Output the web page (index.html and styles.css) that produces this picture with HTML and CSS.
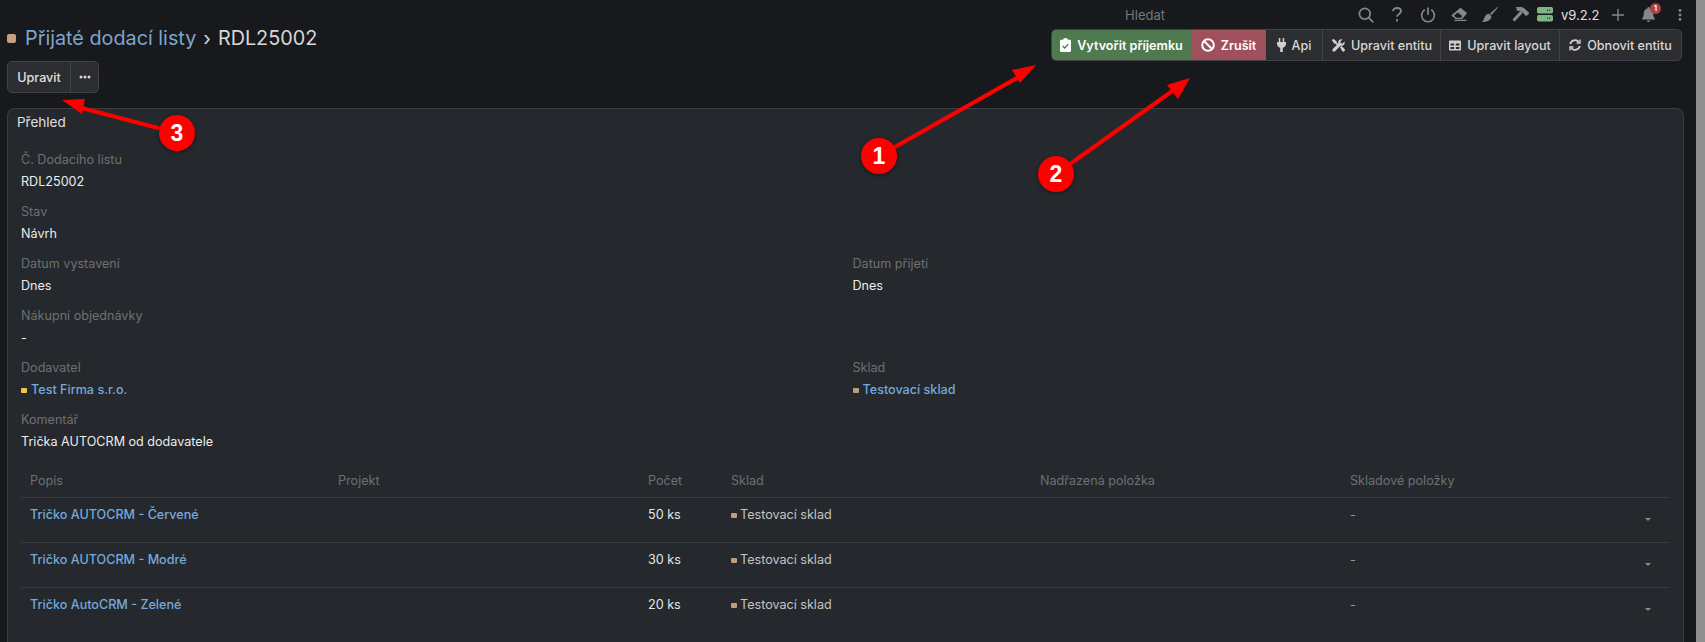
FILE: index.html
```html
<!DOCTYPE html>
<html lang="cs">
<head>
    <meta charset="UTF-8">
    <title>Přijaté dodací listy - RDL25002</title>
    <link rel="stylesheet" href="styles.css">
</head>
<body>
    <div class="page">
        <div class="main">
            <div class="header">
                <div class="header-left">
                    <h1 class="title">
                        <span class="square tan-big"></span>
                        <a class="title-link">Přijaté dodací listy</a>
                        <span class="title-sep">›</span>
                        <span>RDL25002</span>
                    </h1>
                    <div class="btn-group">
                        <button class="btn btn-edit">Upravit</button>
                        <button class="btn btn-more">
                            <svg width="12" height="4" viewBox="0 0 12 4"><circle cx="2" cy="2" r="1.5"/><circle cx="6" cy="2" r="1.5"/><circle cx="10" cy="2" r="1.5"/></svg>
                        </button>
                    </div>
                </div>
                <div class="header-right">
                    <div class="topbar">
                        <span class="search-label">Hledat</span>
                        <span class="top-icon">
                            <svg width="16" height="16" viewBox="0 0 16 16" fill="none" stroke="#85878a" stroke-width="1.7"><circle cx="6.8" cy="6.8" r="5.4"/><path d="M10.800 10.800l4.500 4.500"/></svg>
                        </span>
                        <span class="top-icon">
                            <svg width="10" height="15" viewBox="0 0 10 15" fill="none" stroke="#85878a" stroke-width="1.8"><path d="M1 4.200C1 2.200 2.800 1 5 1s4 1.200 4 3.300c0 2.600-4 2.600-4 5.400"/><path d="M5 12v2.400"/></svg>
                        </span>
                        <span class="top-icon">
                            <svg width="16" height="16" viewBox="0 0 16 16" fill="none" stroke="#85878a" stroke-width="1.7"><path d="M4.800 2.800a6.400 6.400 0 1 0 6.400 0"/><path d="M8 .6v7.200"/></svg>
                        </span>
                        <span class="top-icon">
                            <svg width="16" height="13" viewBox="0 0 16 13" fill="#85878a"><path d="M8.600.5c.5-.5 1.200-.5 1.700-.1l5 3.800c.6.500.6 1.200.2 1.700l-4.400 5.200H4.700L1 8.200c-.5-.5-.4-1.100 0-1.500z"/><rect x="3.500" y="11.700" width="12" height="1.300"/><path d="M3 7.800l2.400 1.900h4.500l1.400-1.600-4.700-3.600z" fill="#18191d"/></svg>
                        </span>
                        <span class="top-icon">
                            <svg width="16" height="15" viewBox="0 0 16 15" fill="#85878a"><path d="M15.400 0l.6.600-6.600 7.700-1.500-1.500z"/><path d="M6.800 6.800l2.600 2.400c-.1 3.200-2.900 5.800-9.400 5.800 1.800-1 1.600-3 2.700-4.900.9-1.800 2.500-3.100 4.100-3.300z"/></svg>
                        </span>
                        <span class="top-icon">
                            <svg width="17" height="15" viewBox="0 0 17 15" fill="none" stroke="#85878a"><path d="M1.500 13.500L9.500 5" stroke-width="3"/><path d="M4.500 1.800C8 1 12 3 15.800 7.800" stroke-width="4.500"/></svg>
                        </span>
                        <span class="server-icon">
                            <svg width="16" height="15" viewBox="0 0 16 15"><rect y="0" width="16" height="6.500" rx="1.800" fill="#7db587"/><rect y="8" width="16" height="6.500" rx="1.800" fill="#7db587"/><path d="M10 3.200h3.500M10 11.200h3.500" stroke="#18191d" stroke-width="1" stroke-dasharray="1.200 1"/></svg>
                        </span>
                        <span class="version">v9.2.2</span>
                        <span class="top-icon plus-cell">
                            <svg width="12" height="12" viewBox="0 0 12 12" stroke="#85878a" stroke-width="1.400"><path d="M6 0v12M0 6h12"/></svg>
                        </span>
                        <span class="top-icon bell-cell">
                            <svg width="13" height="15" viewBox="0 0 13 15" fill="#85878a"><path d="M6.500 0c.6 0 1 .4 1 1v.6c2.300.5 3.700 2.400 3.700 4.700 0 3.200.7 4.200 1.800 5.400v.8H0v-.8c1.100-1.200 1.800-2.200 1.800-5.400 0-2.300 1.400-4.200 3.700-4.700V1c0-.6.400-1 1-1z"/><path d="M4.800 13.500h3.400c0 .9-.8 1.500-1.700 1.500s-1.700-.6-1.700-1.500z"/></svg>
                            <span class="badge">1</span>
                        </span>
                        <span class="top-icon dots-cell">
                            <svg width="4" height="12" viewBox="0 0 4 12" fill="#85878a"><circle cx="2" cy="1.500" r="1.400"/><circle cx="2" cy="6" r="1.400"/><circle cx="2" cy="10.500" r="1.400"/></svg>
                        </span>
                    </div>
                    <div class="actions">
                        <button class="act act-green">
                            <svg width="11" height="14" viewBox="0 0 11 14" fill="#fff"><path d="M1.200 1.800h1.900C3.300.8 4.300 0 5.500 0s2.200.8 2.400 1.800h1.900c.7 0 1.200.5 1.200 1.200v9.800c0 .7-.5 1.200-1.200 1.200H1.200C.5 14 0 13.500 0 12.800V3c0-.7.500-1.200 1.200-1.200z"/><path d="M2.700 8l2 2 3.600-3.700" fill="none" stroke="#4f7a4f" stroke-width="1.300"/></svg>
                            Vytvořit příjemku
                        </button>
                        <button class="act act-red">
                            <svg width="14" height="14" viewBox="0 0 14 14" fill="none" stroke="#fff" stroke-width="2"><circle cx="7" cy="7" r="5.800"/><path d="M3 3l8 8"/></svg>
                            Zrušit
                        </button>
                        <button class="act act-api">
                            <svg width="9" height="14" viewBox="0 0 9 14" fill="#d0d0d0"><rect x="1.800" y="0" width="1.500" height="4"/><rect x="5.700" y="0" width="1.500" height="4"/><path d="M0 4h9v1.500c0 2.300-1.300 3.800-3.200 4.200V14H3.200V9.700C1.300 9.300 0 7.800 0 5.500z"/></svg>
                            Api
                        </button>
                        <button class="act act-entity">
                            <svg width="14" height="14" viewBox="0 0 14 14" fill="#d0d0d0"><path d="M.8 2.200L2.300.7l3.400 2.700v1.200l2.700 2.700-1.100 1.100-2.700-2.700H3.400z"/><path d="M13.500 3.400c.4 1.300.1 2.600-.8 3.500-.9.900-2.100 1.100-3.200.8L4 13.200c-.6.600-1.600.6-2.200 0-.6-.6-.6-1.600 0-2.200l5.500-5.400c-.3-1.200-.1-2.400.8-3.300.9-.9 2.200-1.200 3.400-.8L9.400 3.600l.3 1.700 1.700.3z"/><path d="M9 9.200l1.400-1.400 3.200 3.200c.5.500.5 1.300 0 1.800l-.5.500c-.5.500-1.300.5-1.800 0z"/></svg>
                            Upravit entitu
                        </button>
                        <button class="act act-layout">
                            <svg width="12" height="11" viewBox="0 0 13 11" fill="#d0d0d0"><path fill-rule="evenodd" d="M1.200 0h10.600c.7 0 1.200.5 1.200 1.200v8.600c0 .7-.5 1.200-1.200 1.200H1.200C.5 11 0 10.500 0 9.800V1.200C0 .5.500 0 1.200 0zM1.700 3.200v2.300h3.900V3.200zm5.700 0v2.300h3.900V3.200zM1.700 7v2.300h3.900V7zm5.700 0v2.300h3.900V7z"/></svg>
                            Upravit layout
                        </button>
                        <button class="act act-refresh">
                            <svg width="12" height="12" viewBox="0 0 12 12" fill="none" stroke="#d0d0d0" stroke-width="1.800"><path d="M1.200 5A4.900 4.900 0 0 1 9.800 3"/><path d="M10.800 7A4.900 4.900 0 0 1 2.200 9"/><path d="M11 .6v3.400H7.600M1 11.400V8h3.400" stroke-width="1.400"/></svg>
                            Obnovit entitu
                        </button>
                    </div>
                </div>
            </div>

            <div class="card">
                <div class="card-title">Přehled</div>
                <div class="fields">
                    <div class="field field-full">
                        <div class="label">Č. Dodacího listu</div>
                        <div class="value">RDL25002</div>
                    </div>
                    <div class="field field-full">
                        <div class="label">Stav</div>
                        <div class="value">Návrh</div>
                    </div>
                    <div class="field">
                        <div class="label">Datum vystavení</div>
                        <div class="value">Dnes</div>
                    </div>
                    <div class="field">
                        <div class="label">Datum přijetí</div>
                        <div class="value">Dnes</div>
                    </div>
                    <div class="field field-full">
                        <div class="label">Nákupní objednávky</div>
                        <div class="value">-</div>
                    </div>
                    <div class="field">
                        <div class="label">Dodavatel</div>
                        <div class="value"><span class="square yellow"></span><a class="link">Test Firma s.r.o.</a></div>
                    </div>
                    <div class="field">
                        <div class="label">Sklad</div>
                        <div class="value"><span class="square tan"></span><a class="link">Testovací sklad</a></div>
                    </div>
                    <div class="field field-full">
                        <div class="label">Komentář</div>
                        <div class="value">Trička AUTOCRM od dodavatele</div>
                    </div>
                </div>

                <table class="items">
                    <colgroup>
                        <col class="c-popis"><col class="c-projekt"><col class="c-pocet"><col class="c-sklad"><col class="c-nadr"><col class="c-polozky"><col class="c-menu">
                    </colgroup>
                    <thead>
                        <tr><th>Popis</th><th>Projekt</th><th>Počet</th><th>Sklad</th><th>Nadřazená položka</th><th>Skladové položky</th><th></th></tr>
                    </thead>
                    <tbody>
                        <tr>
                            <td><a class="link">Tričko AUTOCRM - Červené</a></td><td></td><td>50 ks</td>
                            <td class="muted"><span class="square tan"></span>Testovací sklad</td><td></td><td class="dash">-</td>
                            <td><span class="caret"></span></td>
                        </tr>
                        <tr>
                            <td><a class="link">Tričko AUTOCRM - Modré</a></td><td></td><td>30 ks</td>
                            <td class="muted"><span class="square tan"></span>Testovací sklad</td><td></td><td class="dash">-</td>
                            <td><span class="caret"></span></td>
                        </tr>
                        <tr>
                            <td><a class="link">Tričko AutoCRM - Zelené</a></td><td></td><td>20 ks</td>
                            <td class="muted"><span class="square tan"></span>Testovací sklad</td><td></td><td class="dash">-</td>
                            <td><span class="caret"></span></td>
                        </tr>
                    </tbody>
                </table>
            </div>
        </div>
        <div class="scrollbar"></div>
    </div>

    <!-- red annotations drawn over the page -->
    <svg class="notes" width="1705" height="642" viewBox="0 0 1705 642">
        <g stroke="#f00" stroke-width="4" fill="none">
            <path d="M879 156L1024 74"/>
            <path d="M1056 174L1178 87"/>
            <path d="M177 133L78 107"/>
        </g>
        <g fill="#f00">
            <path d="M1036 65L1012 70L1020 83z"/>
            <path d="M1190 78L1167 85L1178 99z"/>
            <path d="M62 100L85 99L82 114z"/>
        </g>
        <g fill="#f00" class="note-dot">
            <circle cx="879" cy="156" r="18"/>
            <circle cx="1056" cy="174" r="18"/>
            <circle cx="177" cy="133" r="18"/>
        </g>
        <g class="note-num" text-anchor="middle">
            <text x="879" y="164">1</text>
            <text x="1056" y="182">2</text>
            <text x="177" y="141">3</text>
        </g>
    </svg>
</body>
</html>
```

FILE: styles.css
```css
* { box-sizing: border-box; }
html, body { height: 100%; }
body { margin: 0; background: #18191d; color: #e6e6e6; font-family: Inter, "Liberation Sans", sans-serif; font-size: 12.600px; overflow: hidden; }
button { font-family: inherit; cursor: pointer; }

.page { display: flex; height: 642px; }
.main { flex: 1; min-width: 0; padding: 0 12px 0 7px; display: flex; flex-direction: column; }
.scrollbar { width: 9px; background: #8f8f8f; }

.header { display: flex; justify-content: space-between; }
.header-left { padding-top: 25px; }
.title { margin: 0 0 10px; font-size: 19.800px; line-height: 26px; font-weight: 400; color: #d8d8d8; display: flex; align-items: center; }
.title-link { color: #7ea6cb; margin-left: 9px; }
.title-sep { margin: 0 7px; }

.square { display: inline-block; width: 6px; height: 5px; border-radius: 1px; margin-right: 4px; vertical-align: 1px; }
.tan { background: #bf9c7c; }
.yellow { background: #f1c34f; }
.tan-big { background: #c4a07f; width: 9px; height: 9px; margin-right: 0; border-radius: 2px; }
.muted .square { margin-right: 3px; }

.btn-group { display: flex; height: 32px; border: 1px solid #424346; border-radius: 5px; background: #2c2d30; width: 92px; }
.btn { border: 0; background: none; color: #e0e0e0; font-size: 12.600px; font-weight: 500; padding: 0; }
.btn-edit { width: 63px; border-right: 1px solid #424346; }
.btn-more { flex: 1; }
.btn-more svg { fill: #d8d8d8; display: block; margin: 0 auto; }

.header-right { display: flex; flex-direction: column; align-items: flex-end; padding-right: 2px; }
.topbar { display: flex; align-items: center; height: 29px; }
.search-label { color: #75777a; font-size: 13px; margin-right: 185px; }
.top-icon { width: 31px; display: flex; justify-content: center; align-items: center; position: relative; }
.server-icon { margin-left: 1px; display: flex; }
.version { color: #e0e0e0; font-size: 13px; margin-left: 8px; width: 37px; white-space: nowrap; }
.plus-cell { margin-left: 4px; }
.dots-cell { width: 31px; margin-right: -13px; }
.badge { position: absolute; top: -4px; left: 17px; width: 11px; height: 11px; border-radius: 50%; background: #a8414f; color: #fff; font-size: 8px; line-height: 11px; text-align: center; font-weight: 600; }

.actions { display: flex; height: 32px; border: 1px solid #424346; border-radius: 5px; background: #2c2d30; overflow: hidden; }
.act { border: 0; border-right: 1px solid #424346; background: none; color: #d8d8d8; font-size: 12.600px; font-weight: 500; display: flex; align-items: center; justify-content: center; gap: 6px; padding: 0; white-space: nowrap; }
.act:last-child { border-right: 0; }
.act-green { width: 139px; background: #4f7a4f; color: #fff; font-weight: 600; border-right: 0; }
.act-red { width: 75px; background: #a0505c; color: #fff; font-weight: 600; border-right: 0; }
.act-api { width: 57px; }
.act-entity { width: 118px; }
.act-layout { width: 119px; }
.act-refresh { width: 121px; }

.card { flex: 1; margin-top: 15px; background: #25282d; border: 1px solid #3b3d41; border-bottom: 0; border-radius: 8px 8px 0 0; padding: 0 13px; }
.card-title { font-size: 13.500px; line-height: 20px; margin: 3px 0 0 -4px; color: #e0e0e0; }
.fields { display: grid; grid-template-columns: 1fr 1fr; column-gap: 14px; margin-top: 18px; margin-bottom: 0.500px; }
.field { height: 52px; }
.field-full { grid-column: 1 / -1; }
.label { color: #6e7073; line-height: 20px; }
.value { color: #ececec; line-height: 23px; }
.link { color: #74a9dc; font-weight: 500; }

.items { width: 1648px; table-layout: fixed; border-collapse: collapse; }
.c-popis { width: 308px; }
.c-projekt { width: 310px; }
.c-pocet { width: 83px; }
.c-sklad { width: 309px; }
.c-nadr { width: 310px; }
.c-polozky { width: 289px; }
.c-menu { width: 39px; }
.items th { color: #6e7073; font-weight: 400; text-align: left; vertical-align: top; padding: 8px 0 0 9px; line-height: 20px; height: 35px; border-bottom: 1px solid #3b3d41; }
.items td { height: 45px; padding: 7px 0 0 9px; vertical-align: top; line-height: 20px; border-bottom: 1px solid #3b3d41; }
.items tr:last-child td { border-bottom: 0; }
.muted { color: #c4c4c4; }
.dash { color: #9a9a9a; }
.caret { display: block; width: 0; height: 0; margin: 13px 0 0 6px; border-left: 3px solid transparent; border-right: 3px solid transparent; border-top: 3px solid #8a8c8f; }

.notes { position: absolute; left: 0; top: 0; pointer-events: none; }
.note-dot { filter: drop-shadow(0 1px 2px rgba(0, 0, 0, 0.45)); }
.note-num { font-family: "Liberation Sans", sans-serif; font-size: 23px; font-weight: 700; fill: #fff; }
```
